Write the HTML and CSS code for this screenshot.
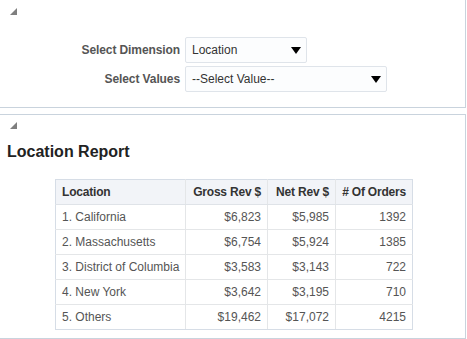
FILE: index.html
```html
<!DOCTYPE html>
<html>
<head>
<meta charset="utf-8">
<link rel="stylesheet" href="styles.css">
</head>
<body>
<div class="panel panel-top">
  <div class="collapse-icon"></div>
  <div class="form">
    <div class="form-row">
      <label class="form-label">Select Dimension</label>
      <div class="select select-dim"><span>Location</span><span class="arrow"></span></div>
    </div>
    <div class="form-row">
      <label class="form-label">Select Values</label>
      <div class="select select-val"><span>--Select Value--</span><span class="arrow"></span></div>
    </div>
  </div>
</div>
<div class="panel panel-report">
  <div class="collapse-icon"></div>
  <h1 class="title">Location Report</h1>
  <table class="report">
    <colgroup>
      <col class="c-loc"><col class="c-gross"><col class="c-net"><col class="c-orders">
    </colgroup>
    <thead>
      <tr><th class="left">Location</th><th>Gross Rev $</th><th>Net Rev $</th><th># Of Orders</th></tr>
    </thead>
    <tbody>
      <tr><td class="left">1. California</td><td>$6,823</td><td>$5,985</td><td>1392</td></tr>
      <tr><td class="left">2. Massachusetts</td><td>$6,754</td><td>$5,924</td><td>1385</td></tr>
      <tr><td class="left">3. District of Columbia</td><td>$3,583</td><td>$3,143</td><td>722</td></tr>
      <tr><td class="left">4. New York</td><td>$3,642</td><td>$3,195</td><td>710</td></tr>
      <tr><td class="left">5. Others</td><td>$19,462</td><td>$17,072</td><td>4215</td></tr>
    </tbody>
  </table>
</div>
</body>
</html>
```
FILE: styles.css
```css
* { box-sizing: border-box; }
html, body { margin: 0; padding: 0; background: #fff; }
body {
  font-family: "Liberation Sans", Arial, sans-serif;
  font-size: 12px;
  color: #333;
  width: 467px;
}
.panel {
  width: 466px;
  border-right: 1px solid #c9d3dd;
  border-bottom: 1px solid #c9d3dd;
  background: #fff;
}
.panel-top {
  padding: 8px 0 15px 0;
}
.panel-report {
  margin-top: 6px;
  border-top: 1px solid #c9d3dd;
  padding: 7px 0 8px 0;
}
.collapse-icon {
  margin-left: 10px;
  width: 7px;
  height: 7px;
  background: #7f7f7f;
  clip-path: polygon(100% 0, 100% 100%, 0 100%);
}
.form {
  margin-top: 22px;
  display: flex;
  flex-direction: column;
  gap: 3px;
}
.form-row {
  display: flex;
  align-items: center;
}
.form-label {
  width: 180px;
  text-align: right;
  font-weight: bold;
  color: #555;
  letter-spacing: -0.1px;
}
.select {
  margin-left: 5px;
  height: 26px;
  border: 1px solid #dfe4ea;
  border-radius: 2px;
  background: #fcfdfe;
  display: flex;
  align-items: center;
  justify-content: space-between;
  padding: 0 5px 0 6px;
  color: #333;
}
.select-dim { width: 122px; }
.select-val { width: 202px; }
.arrow {
  width: 0;
  height: 0;
  border-left: 5px solid transparent;
  border-right: 5px solid transparent;
  border-top: 7px solid #000;
  margin-top: 1px;
}
.title {
  margin: 14px 0 0 7px;
  font-size: 16px;
  line-height: 18px;
  font-weight: bold;
  color: #222;
}
.report {
  margin: 18px 0 0 55px;
  width: 357px;
  table-layout: fixed;
  border-collapse: collapse;
  border: 1px solid #d6dde6;
}
.c-loc { width: 130px; }
.c-gross { width: 82px; }
.c-net { width: 68px; }
.c-orders { width: 77px; }
.report th, .report td {
  height: 25px;
  padding: 0 6px;
  border: 1px solid #e4e6e8;
  text-align: right;
  white-space: nowrap;
  overflow: visible;
  font-size: 12px;
}
.report th {
  background: #f2f4f8;
  font-weight: bold;
  color: #333;
  border-bottom-color: #dfe3e8;
  letter-spacing: -0.2px;
}
.report td { color: #555; }
.report .left { text-align: left; }
.report tr:first-child th { border-top-color: #d6dde6; }
.report tr > :first-child { border-left-color: #d6dde6; }
.report tr > :last-child { border-right-color: #d6dde6; }
.report tbody tr:last-child td { border-bottom-color: #d6dde6; }
```
